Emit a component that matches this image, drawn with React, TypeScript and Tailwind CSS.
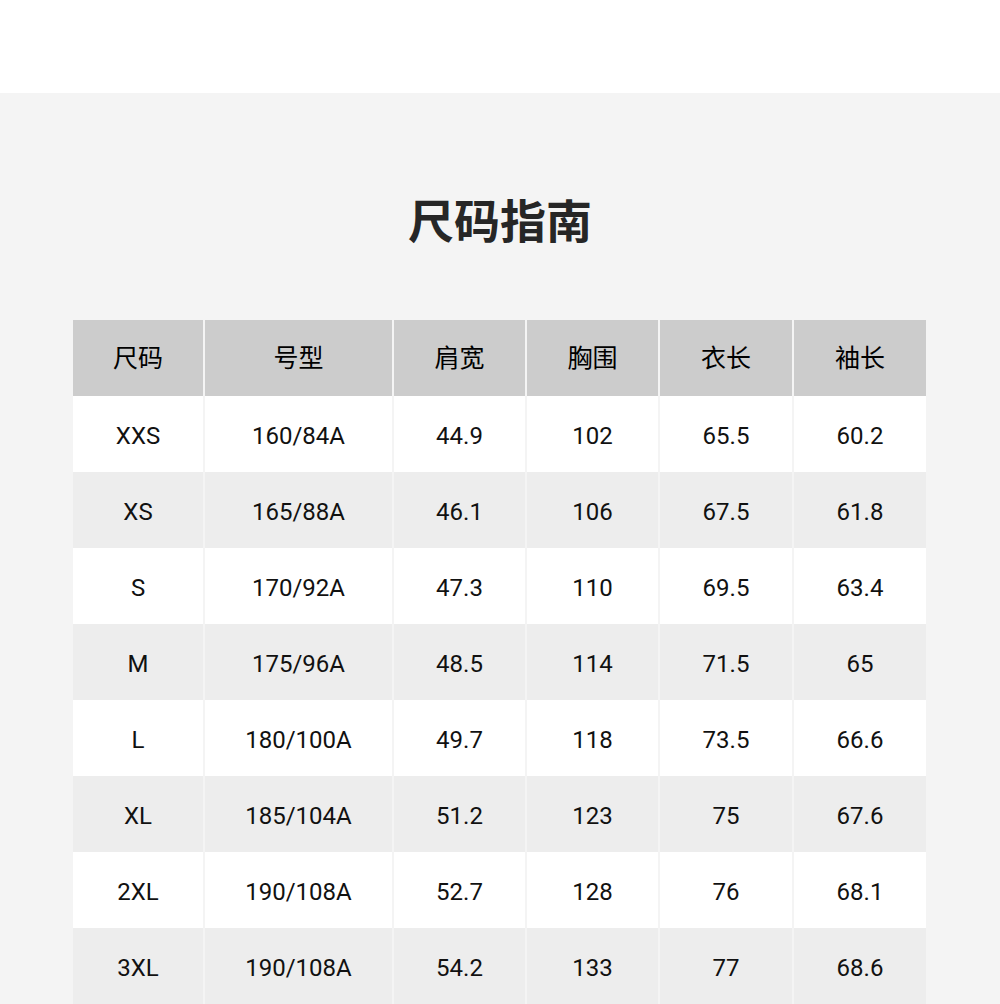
const headers = ["尺码", "号型", "肩宽", "胸围", "衣长", "袖长"];

const rows: string[][] = [
  ["XXS", "160/84A", "44.9", "102", "65.5", "60.2"],
  ["XS", "165/88A", "46.1", "106", "67.5", "61.8"],
  ["S", "170/92A", "47.3", "110", "69.5", "63.4"],
  ["M", "175/96A", "48.5", "114", "71.5", "65"],
  ["L", "180/100A", "49.7", "118", "73.5", "66.6"],
  ["XL", "185/104A", "51.2", "123", "75", "67.6"],
  ["2XL", "190/108A", "52.7", "128", "76", "68.1"],
  ["3XL", "190/108A", "54.2", "133", "77", "68.6"],
];

const cols = "grid grid-cols-[130px_187px_131px_131px_132px_132px] gap-x-[2px]";

export default function App() {
  return (
    <div
      className="min-h-[1004px] w-[1000px] bg-white text-[#111]"
      style={{ fontFamily: 'Roboto, "Noto Sans CJK SC", sans-serif' }}
    >
      <div className="h-[93px] bg-white" />
      <div className="bg-[#f4f4f4] pb-10">
        <h1 className="pt-[100px] text-center text-[46px] font-bold leading-[58px] text-[#262626]">
          尺码指南
        </h1>
        <div className="mx-[73px] mt-[69px]">
          <div className={`${cols} h-[76px]`}>
            {headers.map((h) => (
              <div
                key={h}
                className="flex items-center justify-center bg-[#cccccc] pt-[1px] text-[25px] text-black"
              >
                {h}
              </div>
            ))}
          </div>
          {rows.map((r, i) => (
            <div key={i} className={`${cols} h-[76px]`}>
              {r.map((c, j) => (
                <div
                  key={j}
                  className={`flex items-center justify-center pt-[3px] text-[24px] ${
                    i % 2 === 0 ? "bg-white" : "bg-[#ededed]"
                  }`}
                >
                  {c}
                </div>
              ))}
            </div>
          ))}
        </div>
      </div>
    </div>
  );
}
